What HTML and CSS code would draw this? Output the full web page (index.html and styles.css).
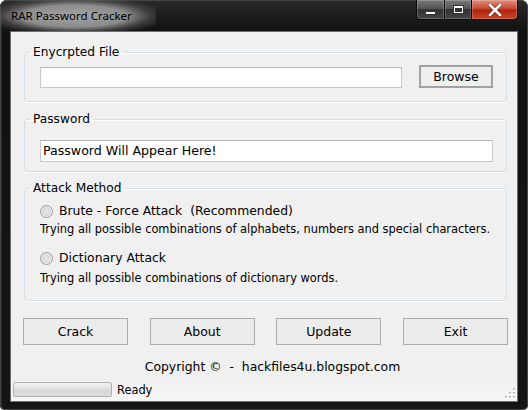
FILE: index.html
```html
<!DOCTYPE html>
<html>
<head>
<meta charset="utf-8">
<link rel="stylesheet" href="styles.css">
</head>
<body>
<div class="window">
  <div class="titlebar">
    <div class="title"><span class="title-text">RAR Password Cracker</span></div>
    <div class="caption">
      <div class="cbtn cmin"><span class="min-glyph"></span></div>
      <div class="cbtn cmax"><span class="max-glyph"></span></div>
      <div class="cbtn cclose">
        <svg width="14" height="12" viewBox="0 0 14 12">
          <path d="M2 1 L12 11 M12 1 L2 11" stroke="#3a1008" stroke-width="4.2" stroke-linecap="square" fill="none" opacity="0.55"/>
          <path d="M2 1 L12 11 M12 1 L2 11" stroke="#ffffff" stroke-width="2.6" stroke-linecap="square" fill="none"/>
        </svg>
      </div>
    </div>
  </div>
  <div class="client">
    <fieldset class="group g1">
      <legend>Enycrpted File</legend>
      <div class="file-row">
        <div class="textbox file-box"></div>
        <div class="btn browse">Browse</div>
      </div>
    </fieldset>
    <fieldset class="group g2">
      <legend>Password</legend>
      <div class="textbox pass-box">Password Will Appear Here!</div>
    </fieldset>
    <fieldset class="group g3">
      <legend>Attack Method</legend>
      <div class="option">
        <span class="radio"></span><span class="opt-label">Brute - Force Attack&nbsp; (Recommended)</span>
      </div>
      <div class="desc">Trying all possible combinations of alphabets, numbers and special characters.</div>
      <div class="option opt2">
        <span class="radio"></span><span class="opt-label">Dictionary Attack</span>
      </div>
      <div class="desc">Trying all possible combinations of dictionary words.</div>
    </fieldset>
    <div class="buttons">
      <div class="btn action">Crack</div>
      <div class="btn action">About</div>
      <div class="btn action">Update</div>
      <div class="btn action">Exit</div>
    </div>
    <div class="copyright">Copyright ©&nbsp; -&nbsp; hackfiles4u.blogspot.com</div>
    <div class="statusbar">
      <div class="progress"></div>
      <span class="status-text">Ready</span>
      <svg class="grip" width="11" height="11" viewBox="0 0 11 11">
        <g fill="#b4b4b4">
          <rect x="8" y="0" width="2" height="2"/>
          <rect x="4" y="4" width="2" height="2"/><rect x="8" y="4" width="2" height="2"/>
          <rect x="0" y="8" width="2" height="2"/><rect x="4" y="8" width="2" height="2"/><rect x="8" y="8" width="2" height="2"/>
        </g>
        <g fill="#ffffff">
          <rect x="9" y="1" width="1" height="1"/>
          <rect x="5" y="5" width="1" height="1"/><rect x="9" y="5" width="1" height="1"/>
          <rect x="1" y="9" width="1" height="1"/><rect x="5" y="9" width="1" height="1"/><rect x="9" y="9" width="1" height="1"/>
        </g>
      </svg>
    </div>
  </div>
</div>
</body>
</html>
```
FILE: styles.css
```css
html, body {
  margin: 0;
  padding: 0;
  background: #ffffff;
}
.window {
  width: 528px;
  height: 410px;
  box-sizing: border-box;
  border-radius: 7px 7px 5px 5px;
  background: linear-gradient(to bottom, #2a2a2a 0px, #121212 30px, #141414 100%);
  box-shadow: inset 0 0 0 1px #444, inset 2px 0 0 #262626;
  display: flex;
  flex-direction: column;
  overflow: hidden;
}
.titlebar {
  height: 31px;
  display: flex;
  justify-content: space-between;
  align-items: flex-start;
}
.title {
  height: 31px;
  display: flex;
  align-items: center;
}
.title-text {
  display: block;
  padding: 8px 24px 7px 11px;
  font-family: "Noto Sans", "Open Sans", sans-serif;
  font-size: 11.5px;
  line-height: 16px;
  color: #000;
  background: radial-gradient(ellipse 60% 64% at 48% 52%, rgba(170,170,170,0.95) 0%, rgba(160,160,160,0.85) 55%, rgba(110,110,110,0.4) 80%, rgba(40,40,40,0) 100%);
}
.caption {
  display: flex;
  margin-right: 10px;
}
.cbtn {
  height: 20px;
  box-sizing: border-box;
  border: 1px solid #0a0a0a;
  border-top: none;
  display: flex;
  align-items: center;
  justify-content: center;
  box-shadow: inset 0 0 0 1px rgba(255,255,255,0.2);
}
.cmin {
  width: 29px;
  border-radius: 0 0 0 4px;
  background: linear-gradient(to bottom, #7a7a7a 0%, #555 45%, #333 50%, #444 100%);
}
.cmax {
  width: 27px;
  border-left: none;
  background: linear-gradient(to bottom, #7a7a7a 0%, #555 45%, #333 50%, #444 100%);
}
.cclose {
  width: 46px;
  border-left: none;
  border-radius: 0 0 4px 0;
  background: linear-gradient(to bottom, #e09080 0%, #c94a33 45%, #b0230d 52%, #c8452a 100%);
}
.min-glyph {
  width: 9px;
  height: 2px;
  margin-top: 7px;
  background: #fff;
  box-shadow: 0 0 0 1px #333;
}
.max-glyph {
  width: 7px;
  height: 4px;
  border: 1px solid #fff;
  border-top-width: 2px;
  box-shadow: 0 0 0 1px #333, inset 0 0 0 1px #333;
}
.client {
  margin: 0 10px;
  height: 371px;
  box-sizing: border-box;
  background: #f0f0f0;
  border: 1px solid #6e6e6e;
  padding: 0 10px 0 13px;
  display: flex;
  flex-direction: column;
  font-family: "DejaVu Sans", Verdana, sans-serif;
  color: #000;
}
.group {
  margin: 0;
  border: 1px solid #d5dfe5;
  border-radius: 3px;
  box-shadow: 0 1px 0 #ffffff, inset 0 1px 0 #ffffff;
  padding: 0 0 0 15px;
  min-width: 0;
}
.group legend {
  font-size: 12.2px;
  line-height: 16px;
  padding: 0 3px;
  margin-left: -10px;
}
.g1 {
  margin-top: 12px;
  padding-top: 5px;
  padding-bottom: 13px;
  padding-right: 13px;
}
.g2 {
  margin-top: 9px;
  padding-top: 13px;
  padding-bottom: 9px;
  padding-right: 13px;
}
.g3 {
  margin-top: 8px;
  padding-top: 6px;
  padding-bottom: 14px;
}
.file-row {
  display: flex;
  justify-content: space-between;
  align-items: flex-end;
}
.textbox {
  box-sizing: border-box;
  background: #fff;
  border: 1px solid #c8c8c8;
  border-top-color: #b4b4b4;
}
.file-box {
  width: 362px;
  height: 21px;
}
.pass-box {
  height: 22px;
  font-size: 12.6px;
  line-height: 20px;
  padding-left: 2px;
}
.btn {
  box-sizing: border-box;
  background: #ececec;
  border: 1px solid #acacac;
  display: flex;
  align-items: center;
  justify-content: center;
  font-size: 12.5px;
}
.browse {
  width: 74px;
  height: 23px;
  border: 2px solid #a3a3a3;
  background: #efefef;
}
.option {
  display: flex;
  align-items: center;
  height: 18px;
}
.opt2 {
  margin-top: 12px;
}
.radio {
  width: 11px;
  height: 11px;
  border-radius: 50%;
  border: 1px solid #9a9a9a;
  background: radial-gradient(circle at 50% 50%, #e9e9e9 0%, #dcdcdc 45%, #cfcfcf 60%, #f6f6f6 100%);
  box-shadow: inset 0 0 0 1px #f4f4f4;
  margin-right: 6px;
}
.opt-label {
  font-size: 12.4px;
  line-height: 18px;
}
.desc {
  font-size: 11.4px;
  line-height: 16px;
  margin-top: 1px;
  white-space: nowrap;
}
.opt2 + .desc {
  margin-top: 3px;
}
.buttons {
  display: flex;
  justify-content: space-between;
  margin: 17px -1px 0 -1px;
}
.action {
  width: 105px;
  height: 27px;
}
.copyright {
  margin-top: 14px;
  height: 16px;
  line-height: 16px;
  font-size: 12.4px;
  text-align: center;
  padding-left: 14px;
}
.statusbar {
  margin: 3px -10px 0 -13px;
  flex: 1;
  display: flex;
  align-items: center;
  padding-left: 2px;
  background: linear-gradient(to bottom, #f0f0f0, #f7f7f7);
}
.progress {
  width: 99px;
  height: 15px;
  box-sizing: border-box;
  border: 1px solid #b2b2b2;
  border-radius: 2px;
  background: linear-gradient(to bottom, #f2f2f2 0%, #e2e2e2 45%, #d6d6d6 55%, #dedede 100%);
}
.status-text {
  margin-left: 5px;
  font-size: 11.4px;
  line-height: 16px;
  margin-top: 1px;
}
.grip {
  margin-left: auto;
  margin-right: 1px;
  align-self: flex-end;
  margin-bottom: 2px;
}
```
